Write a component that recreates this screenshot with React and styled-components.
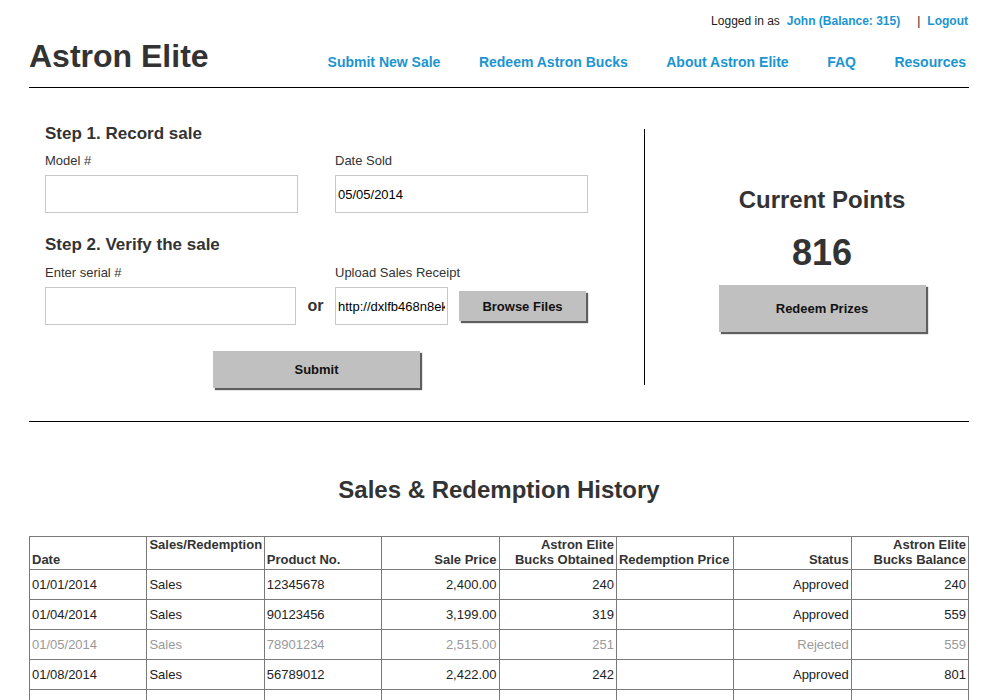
import React from "react";
import styled, { createGlobalStyle, css } from "styled-components";

const GlobalStyle = createGlobalStyle`
  body {
    margin: 0;
    background: #fff;
    font-family: "Liberation Sans", Arial, sans-serif;
    color: #333;
  }
`;

const BLUE = "#1b95d1";

const Page = styled.div`
  width: 940px;
  margin: 0 0 0 29px;
`;

const UserBar = styled.div`
  display: flex;
  justify-content: flex-end;
  align-items: baseline;
  padding: 14px 1px 0 0;
  font-size: 12px;
  line-height: 14px;
  color: #222;
`;

const UserLink = styled.a`
  color: ${BLUE};
  font-weight: 700;
  text-decoration: none;
  margin-left: ${(p) => p.$gap || 0}px;
`;

const Pipe = styled.span`
  margin: 0 7px 0 17px;
`;

const Header = styled.header`
  display: flex;
  justify-content: space-between;
  align-items: baseline;
  margin-top: 10px;
  padding-bottom: 13px;
  border-bottom: 1px solid #000;
`;

const Title = styled.h1`
  margin: 0;
  font-size: 32px;
  line-height: 36px;
  font-weight: 700;
  color: #333;
`;

const Nav = styled.nav`
  display: flex;
  gap: 38.5px;
  padding-right: 3px;
`;

const NavLink = styled.a`
  color: ${BLUE};
  font-size: 14px;
  font-weight: 700;
  text-decoration: none;
`;

const Main = styled.section`
  display: flex;
  align-items: flex-start;
  padding-top: 36px;
  height: 297px;
  border-bottom: 1px solid #000;
`;

const Form = styled.div`
  width: 543px;
  margin-left: 16px;
`;

const StepTitle = styled.h2`
  margin: ${(p) => (p.$second ? "22px" : "0")} 0 0;
  font-size: 17px;
  line-height: 20px;
  font-weight: 700;
  color: #333;
`;

const Row = styled.div`
  display: flex;
  align-items: flex-end;
`;

const Field = styled.div`
  display: flex;
  flex-direction: column;
  width: ${(p) => p.$w}px;
  margin-left: ${(p) => p.$ml || 0}px;
`;

const Label = styled.label`
  font-size: 13px;
  line-height: 16px;
  color: #333;
  margin: ${(p) => (p.$loose ? 10 : 9)}px 0 6px;
`;

const Input = styled.input`
  box-sizing: border-box;
  width: ${(p) => p.$w}px;
  height: 38px;
  border: 1px solid #c8c8c8;
  padding: 0 2px;
  font-family: "Liberation Sans", Arial, sans-serif;
  font-size: 13px;
  color: #000;
  outline: none;
  background: #fff;
`;

const Or = styled.span`
  width: 39px;
  text-align: center;
  font-size: 16px;
  font-weight: 700;
  line-height: 38px;
  color: #333;
`;

const UploadRow = styled.div`
  display: flex;
  align-items: center;
  gap: 11px;
`;

const GrayButton = styled.button`
  box-sizing: border-box;
  background: #c0c0c0;
  border: none;
  box-shadow: 2px 2px 1px #5f5f5f;
  font-family: "Liberation Sans", Arial, sans-serif;
  font-weight: 700;
  font-size: 13px;
  color: #111;
  padding: 0;
  ${(p) =>
    p.$size === "browse" &&
    css`
      width: 127px;
      height: 30px;
    `}
  ${(p) =>
    p.$size === "big" &&
    css`
      width: 207px;
      height: 37px;
    `}
  ${(p) =>
    p.$size === "redeem" &&
    css`
      width: 207px;
      height: 47px;
    `}
`;

const SubmitWrap = styled.div`
  display: flex;
  justify-content: center;
  margin-top: 26px;
`;

const Divider = styled.div`
  width: 1px;
  height: 256px;
  margin: 5px 0 0 56px;
  background: #000;
`;

const Points = styled.div`
  flex: 1;
  display: flex;
  flex-direction: column;
  align-items: center;
  padding: 62px 0 0 30px;
`;

const PointsTitle = styled.div`
  font-size: 24px;
  line-height: 28px;
  font-weight: 700;
  color: #333;
`;

const PointsValue = styled.div`
  font-size: 36px;
  line-height: 40px;
  font-weight: 700;
  color: #333;
  margin: 19px 0 12px;
`;

const HistoryTitle = styled.h2`
  margin: 54px 0 32px;
  text-align: center;
  font-size: 24px;
  line-height: 28px;
  font-weight: 700;
  color: #333;
`;

const Table = styled.table`
  width: 940px;
  table-layout: fixed;
  border-collapse: collapse;
  font-size: 13px;
`;

const Th = styled.th`
  border: 1px solid #7a7a7a;
  padding: 0 2px 2px;
  line-height: 15px;
  font-weight: 700;
  color: #333;
  text-align: ${(p) => (p.$right ? "right" : "left")};
  vertical-align: ${(p) => (p.$top ? "top" : "bottom")};
`;

const Td = styled.td`
  border: 1px solid #7a7a7a;
  padding: 0 2px;
  height: 29px;
  color: ${(p) => (p.$muted ? "#999" : "#222")};
  text-align: ${(p) => (p.$right ? "right" : "left")};
  white-space: nowrap;
  overflow: hidden;
`;

const rows = [
  ["01/01/2014", "Sales", "12345678", "2,400.00", "240", "", "Approved", "240"],
  ["01/04/2014", "Sales", "90123456", "3,199.00", "319", "", "Approved", "559"],
  ["01/05/2014", "Sales", "78901234", "2,515.00", "251", "", "Rejected", "559", true],
  ["01/08/2014", "Sales", "56789012", "2,422.00", "242", "", "Approved", "801"],
  ["", "", "", "", "", "", "", ""],
];

const rightCols = [false, false, false, true, true, false, true, true];

export default function App() {
  return (
    <>
      <GlobalStyle />
      <Page>
        <UserBar>
          Logged in as
          <UserLink href="#" $gap={7}>
            John (Balance: 315)
          </UserLink>
          <Pipe>|</Pipe>
          <UserLink href="#">Logout</UserLink>
        </UserBar>

        <Header>
          <Title>Astron Elite</Title>
          <Nav>
            <NavLink href="#">Submit New Sale</NavLink>
            <NavLink href="#">Redeem Astron Bucks</NavLink>
            <NavLink href="#">About Astron Elite</NavLink>
            <NavLink href="#">FAQ</NavLink>
            <NavLink href="#">Resources</NavLink>
          </Nav>
        </Header>

        <Main>
          <Form>
            <StepTitle>Step 1. Record sale</StepTitle>
            <Row>
              <Field $w={253}>
                <Label>Model #</Label>
                <Input $w={253} />
              </Field>
              <Field $w={253} $ml={37}>
                <Label>Date Sold</Label>
                <Input $w={253} defaultValue="05/05/2014" />
              </Field>
            </Row>

            <StepTitle $second>Step 2. Verify the sale</StepTitle>
            <Row>
              <Field $w={251}>
                <Label $loose>Enter serial #</Label>
                <Input $w={251} />
              </Field>
              <Or>or</Or>
              <Field $w={253}>
                <Label $loose>Upload Sales Receipt</Label>
                <UploadRow>
                  <Input $w={113} defaultValue="http://dxlfb468n8ek.cloudfront.net/receipt.jpg" />
                  <GrayButton $size="browse">Browse Files</GrayButton>
                </UploadRow>
              </Field>
            </Row>

            <SubmitWrap>
              <GrayButton $size="big">Submit</GrayButton>
            </SubmitWrap>
          </Form>

          <Divider />

          <Points>
            <PointsTitle>Current Points</PointsTitle>
            <PointsValue>816</PointsValue>
            <GrayButton $size="redeem">Redeem Prizes</GrayButton>
          </Points>
        </Main>

        <HistoryTitle>Sales &amp; Redemption History</HistoryTitle>

        <Table>
          <thead>
            <tr>
              <Th>Date</Th>
              <Th $top>Sales/Redemption</Th>
              <Th>Product No.</Th>
              <Th $right>Sale Price</Th>
              <Th $right>
                Astron Elite
                <br />
                Bucks Obtained
              </Th>
              <Th>Redemption Price</Th>
              <Th $right>Status</Th>
              <Th $right>
                Astron Elite
                <br />
                Bucks Balance
              </Th>
            </tr>
          </thead>
          <tbody>
            {rows.map((r, i) => (
              <tr key={i}>
                {r.slice(0, 8).map((c, j) => (
                  <Td key={j} $right={rightCols[j]} $muted={r[8]}>
                    {c}
                  </Td>
                ))}
              </tr>
            ))}
          </tbody>
        </Table>
      </Page>
    </>
  );
}
